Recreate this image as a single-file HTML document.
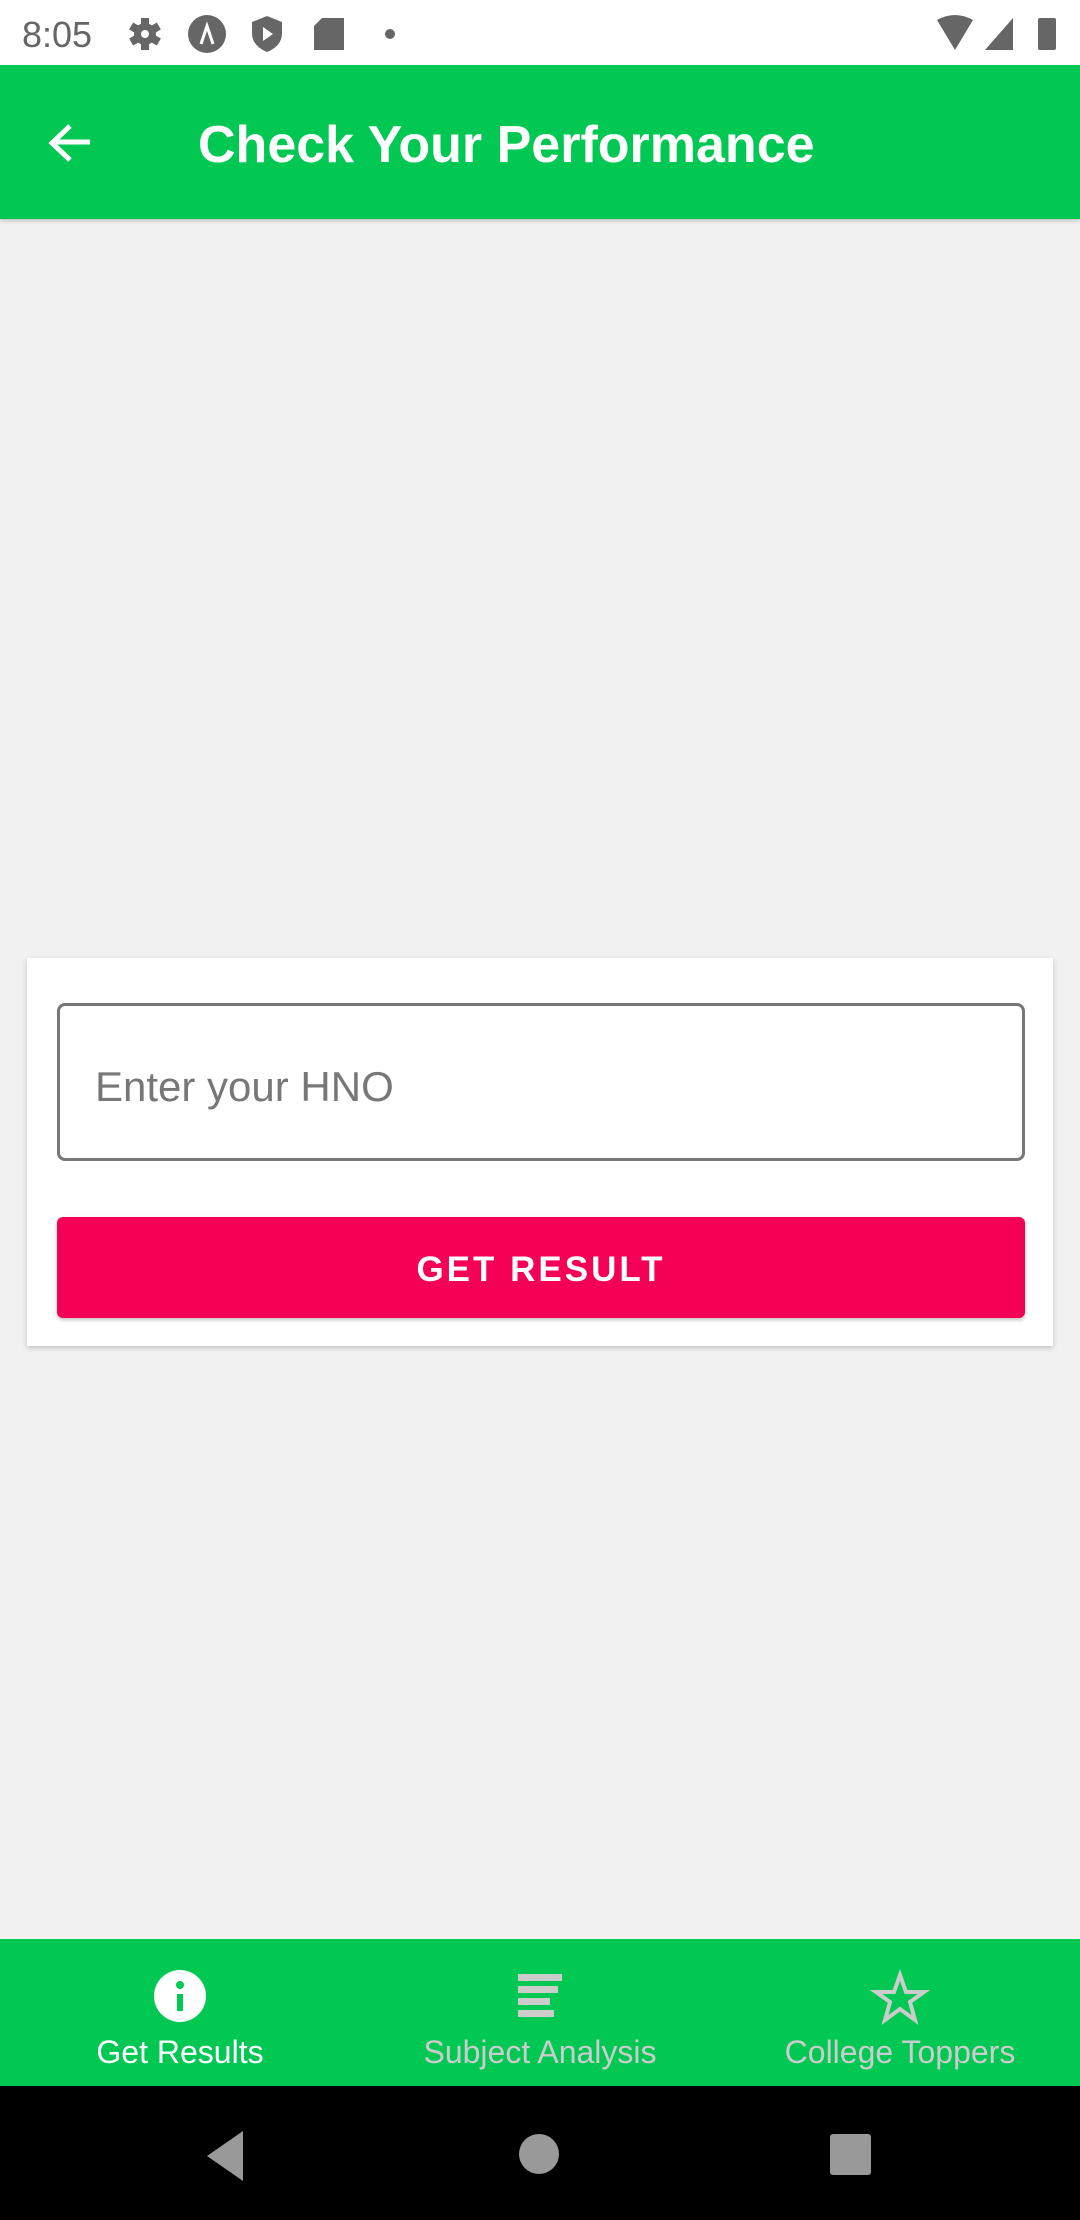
<!DOCTYPE html>
<html><head><meta charset="utf-8"><style>
*{margin:0;padding:0;box-sizing:border-box}
body{width:1080px;height:2220px;background:#f1f1f1;font-family:"Liberation Sans",sans-serif;position:relative;overflow:hidden}
.abs{position:absolute}
</style></head><body>
<div class="abs" style="left:0;top:0;width:1080px;height:65px;background:#fff"></div>
<div class="abs" style="left:22px;top:14px;font-size:36px;color:#666">8:05</div>
<svg class="abs" style="left:125px;top:14px" width="280" height="40" viewBox="0 0 280 40">
<g fill="#666">
<g transform="translate(20 20)">
<rect x="-4" y="-16" width="8" height="32"/>
<rect x="-4" y="-16" width="8" height="32" transform="rotate(60)"/>
<rect x="-4" y="-16" width="8" height="32" transform="rotate(120)"/>
<circle r="11"/>
</g>
<circle cx="82" cy="20" r="19"/>
<path d="M142 2 L157 8 V19 Q157 32 142 38 Q127 32 127 19 V8Z"/>
<path d="M197 4 H219 V36 H189 V12Z"/>
<circle cx="265" cy="20" r="5"/>
</g>
<circle cx="20" cy="20" r="4" fill="#fff"/>
<path d="M76 30 L82 12 L88 30" stroke="#fff" stroke-width="3" fill="none"/>
<path d="M138 13 V27 L148 20Z" fill="#fff"/>
</svg>
<svg class="abs" style="left:935px;top:14px" width="130" height="40" viewBox="0 0 130 40">
<path d="M2 6 Q20 -4 38 6 L20 36Z" fill="#666"/>
<path d="M78 4 V36 H50Z" fill="#666"/>
<rect x="103" y="4" width="18" height="32" rx="2" fill="#666"/>
</svg>
<div class="abs" style="left:0;top:65px;width:1080px;height:154px;background:#00c853;box-shadow:0 2px 4px rgba(0,0,0,.2)"></div>
<svg class="abs" style="left:46px;top:120px" width="48" height="48" viewBox="0 0 48 48"><path d="M44 22 H10 M24 6 L6 23 L24 40" stroke="#fff" stroke-width="5" fill="none"/></svg>
<div class="abs" style="left:198px;top:115px;font-size:52px;color:#fff;font-weight:bold;white-space:nowrap;letter-spacing:0px">Check Your Performance</div>
<div class="abs" style="left:27px;top:958px;width:1026px;height:388px;background:#fff;box-shadow:0 2px 5px rgba(0,0,0,.2)"></div>
<div class="abs" style="left:57px;top:1003px;width:968px;height:158px;border:3px solid #777;border-radius:8px"></div>
<div class="abs" style="left:95px;top:1063px;font-size:42px;color:#777">Enter your HNO</div>
<div class="abs" style="left:57px;top:1217px;width:968px;height:101px;background:#f50057;border-radius:6px;box-shadow:0 2px 4px rgba(0,0,0,.25);color:#fff;font-size:35px;font-weight:bold;letter-spacing:3px;text-align:center;line-height:105px">GET RESULT</div>
<div class="abs" style="left:0;top:1939px;width:1080px;height:147px;background:#00c853"></div>
<svg class="abs" style="left:0;top:1965px" width="1080" height="60" viewBox="0 0 1080 60">
<circle cx="180" cy="31" r="26" fill="#fff"/><rect x="177" y="29" width="6" height="17" fill="#00c853"/><circle cx="180" cy="20" r="4" fill="#00c853"/>
<g fill="#ccc"><rect x="518" y="9" width="44" height="7"/><rect x="518" y="21" width="40" height="7"/><rect x="518" y="33" width="32" height="7"/><rect x="518" y="45" width="36" height="7"/></g>
<path d="M900 10 L906 27 L924 27 L910 37 L915 55 L900 44 L885 55 L890 37 L876 27 L894 27Z" fill="none" stroke="#ccc" stroke-width="4"/>
</svg>
<div class="abs" style="left:0;top:2034px;width:360px;text-align:center;font-size:32px;color:#fff">Get Results</div>
<div class="abs" style="left:360px;top:2034px;width:360px;text-align:center;font-size:32px;color:#ccc">Subject Analysis</div>
<div class="abs" style="left:720px;top:2034px;width:360px;text-align:center;font-size:32px;color:#ccc">College Toppers</div>
<div class="abs" style="left:0;top:2086px;width:1080px;height:134px;background:#000"></div>
<svg class="abs" style="left:0;top:2086px" width="1080" height="134" viewBox="0 0 1080 134">
<path d="M243 45 V95 L207 70Z" fill="#999"/>
<circle cx="539" cy="68" r="20" fill="#999"/>
<rect x="830" y="48" width="41" height="41" rx="3" fill="#999"/>
</svg>
</body></html>
